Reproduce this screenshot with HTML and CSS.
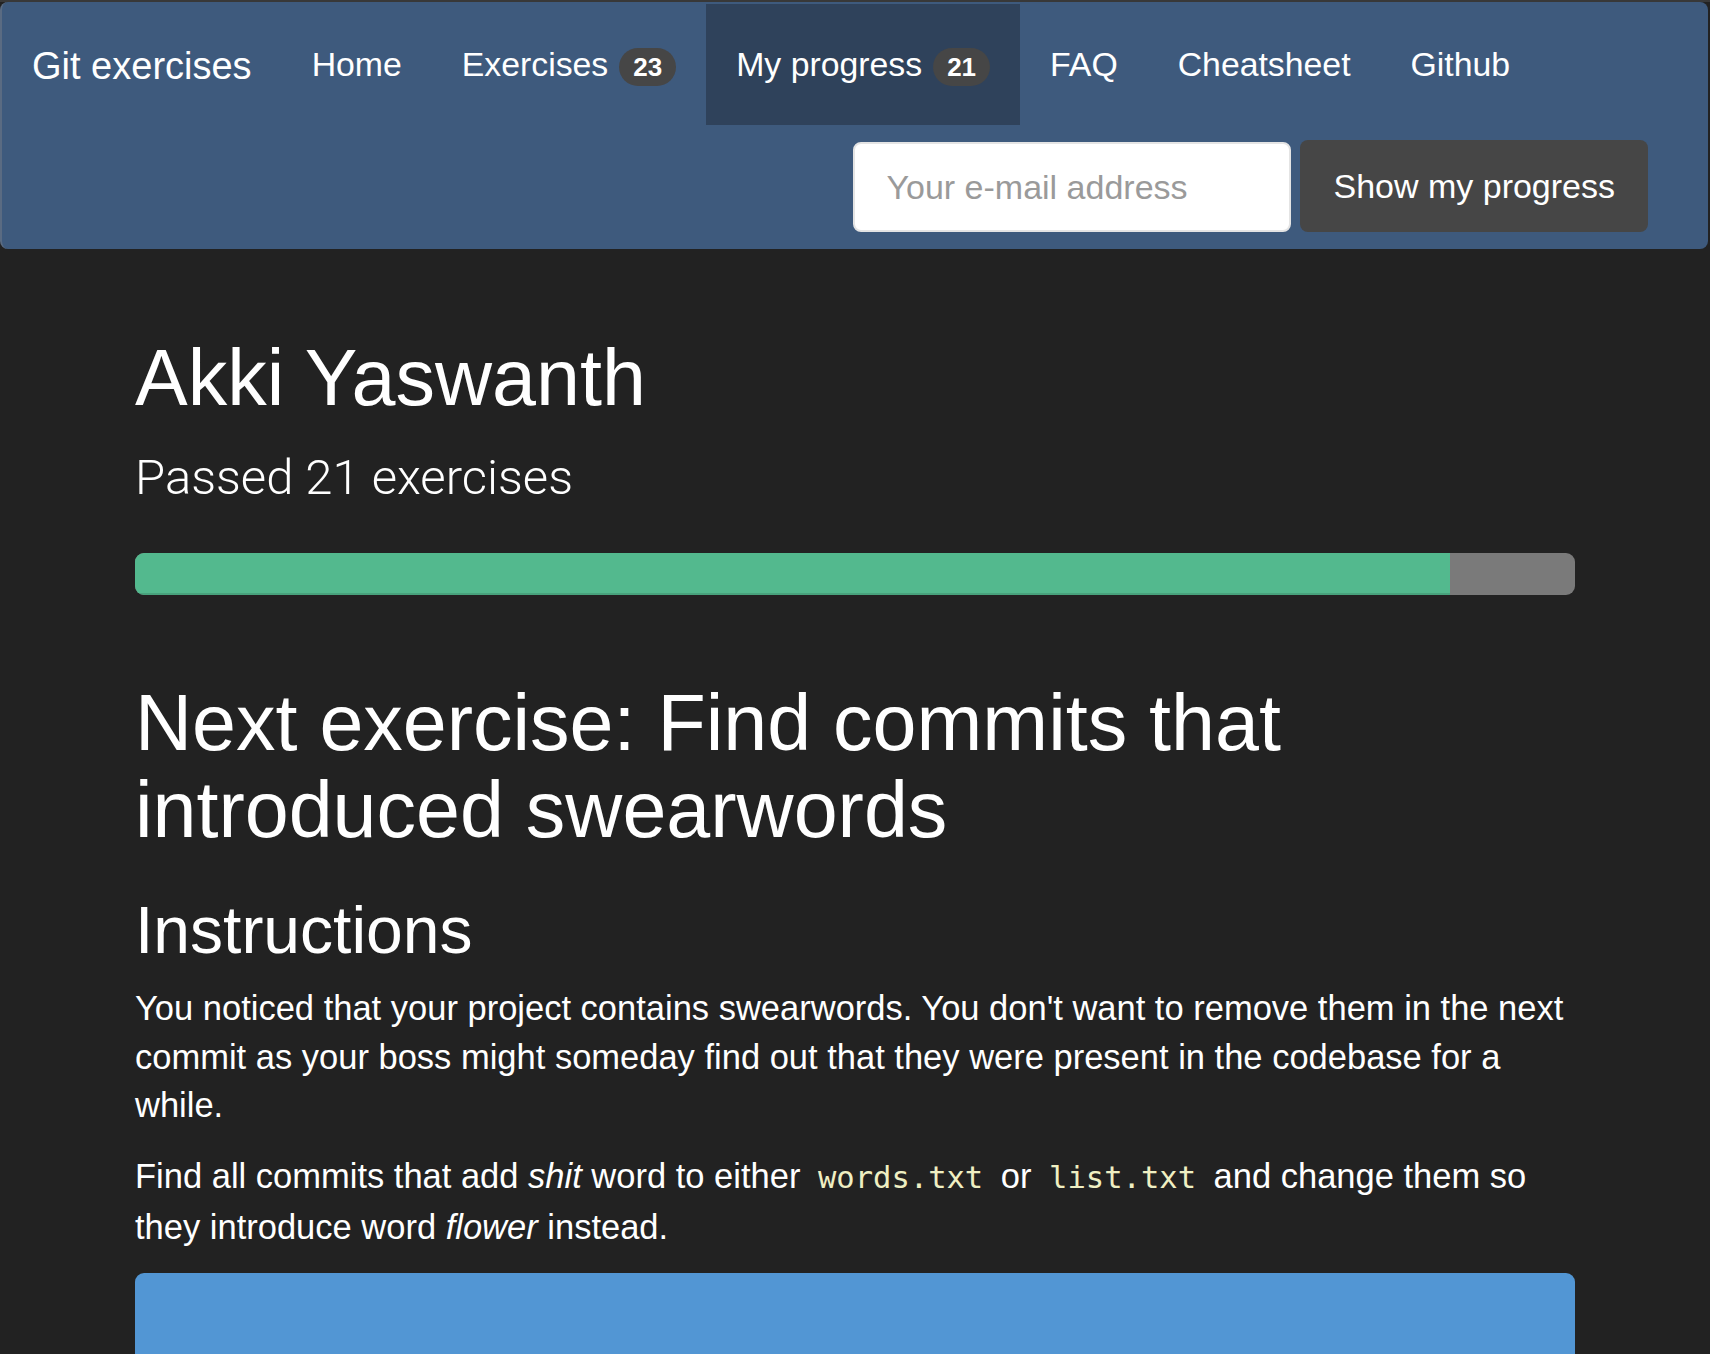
FILE: index.html
```html
<!DOCTYPE html>
<html lang="en">
<head>
<meta charset="utf-8">
<title>Git exercises - My progress</title>
<link rel="stylesheet" href="styles.css">
</head>
<body>
<nav class="navbar">
  <div class="nav-top">
    <a class="brand" href="#">Git exercises</a>
    <ul class="nav-links">
      <li><a class="nav-link" href="#">Home</a></li>
      <li><a class="nav-link" href="#">Exercises<span class="badge">23</span></a></li>
      <li><a class="nav-link active" href="#">My progress<span class="badge">21</span></a></li>
      <li><a class="nav-link" href="#">FAQ</a></li>
      <li><a class="nav-link" href="#">Cheatsheet</a></li>
      <li><a class="nav-link" href="#">Github</a></li>
    </ul>
  </div>
  <form class="nav-form">
    <input class="email-input" type="email" placeholder="Your e-mail address">
    <button class="btn-progress" type="button">Show my progress</button>
  </form>
</nav>

<main class="container">
  <h1 class="name">Akki Yaswanth</h1>
  <p class="lead">Passed 21 exercises</p>
  <div class="progress">
    <div class="progress-bar" style="width: 91.3043%"></div>
  </div>

  <h1 class="next">Next exercise: Find commits that introduced swearwords</h1>
  <h2 class="section-title">Instructions</h2>
  <p class="text first">You noticed that your project contains swearwords. You don't want to remove them in the next commit as your boss might someday find out that they were present in the codebase for a while.</p>
  <p class="text second">Find all commits that add <em>shit</em> word to either <code>words.txt</code> or <code>list.txt</code> and change them so they introduce word <em>flower</em> instead.</p>
  <div class="command-box"></div>
</main>
</body>
</html>
```

FILE: styles.css
```css
html, body {
  margin: 0;
  padding: 0;
}

body {
  background: #222222;
  color: #ffffff;
  font-family: "Liberation Sans", Arial, sans-serif;
  border-top: 2px solid #383838;
}

.navbar {
  background: #3e5a7d;
  border-left: 2px solid #5a6b82;
  border-radius: 8px;
  margin-right: 2px;
  padding-top: 2px;
  padding-bottom: 17px;
}

.nav-top {
  display: flex;
  align-items: stretch;
  height: 121px;
}

.brand {
  display: flex;
  align-items: center;
  padding: 4px 30px 0 30px;
  color: #ffffff;
  text-decoration: none;
  font-size: 38px;
}

.nav-links {
  display: flex;
  margin: 0;
  padding: 0;
  list-style: none;
}

.nav-links li {
  display: flex;
}

.nav-link {
  display: flex;
  align-items: center;
  padding: 0 30px;
  color: #ffffff;
  text-decoration: none;
  font-size: 33.8px;
}

.nav-link.active {
  background: #2f425b;
}

.badge {
  display: inline-block;
  margin-left: 11px;
  margin-top: 5px;
  height: 38px;
  line-height: 38px;
  padding: 0 14px;
  border-radius: 19px;
  background: #464646;
  color: #ffffff;
  font-weight: bold;
  font-size: 26px;
}

.nav-form {
  display: flex;
  justify-content: flex-end;
  align-items: flex-end;
  margin: 15px 60px 0 0;
  gap: 9px;
}

.email-input {
  box-sizing: border-box;
  width: 438px;
  height: 90px;
  padding: 0 31px;
  border: 2px solid #e4e4e4;
  border-radius: 8px;
  background: #ffffff;
  font-family: "Liberation Sans", Arial, sans-serif;
  font-size: 34px;
  color: #333;
  outline: none;
}

.email-input::placeholder {
  color: #9a9a9a;
}

.btn-progress {
  box-sizing: border-box;
  height: 92px;
  padding: 0 33px;
  border: none;
  border-radius: 8px;
  background: #464646;
  color: #ffffff;
  font-family: "Liberation Sans", Arial, sans-serif;
  font-size: 34px;
}

.container {
  width: 1440px;
  margin: 0 auto;
}

.name,
.next {
  font-size: 79px;
  font-weight: normal;
  line-height: 1.1;
  margin: 0;
}

.name {
  margin-top: 86px;
}

.lead {
  font-family: Roboto, "Liberation Sans", sans-serif;
  font-weight: 300;
  font-size: 49px;
  line-height: 64px;
  margin: 24px 0 0 0;
}

.progress {
  margin-top: 43px;
  height: 42px;
  border-radius: 9px;
  background: #7a7a7a;
  overflow: hidden;
  display: flex;
}

.progress-bar {
  height: 100%;
  background: #53b98e;
  box-shadow: inset 0 -2px 0 rgba(0, 0, 0, 0.12);
}

.next {
  margin-top: 85px;
}

.section-title {
  font-size: 66px;
  font-weight: normal;
  line-height: 1.1;
  margin: 40px 0 0 0;
}

.text {
  font-size: 34.5px;
  line-height: 48.5px;
  margin: 0;
}

.text.first {
  margin-top: 18px;
}

.text.second {
  margin-top: 22.5px;
}

code {
  font-family: "DejaVu Sans Mono", "Liberation Mono", monospace;
  font-size: 30.5px;
  color: #efefc2;
  padding: 0 8px;
}

.command-box {
  margin-top: 22px;
  height: 200px;
  background: #5296d4;
  border-radius: 9px 9px 0 0;
}
```
